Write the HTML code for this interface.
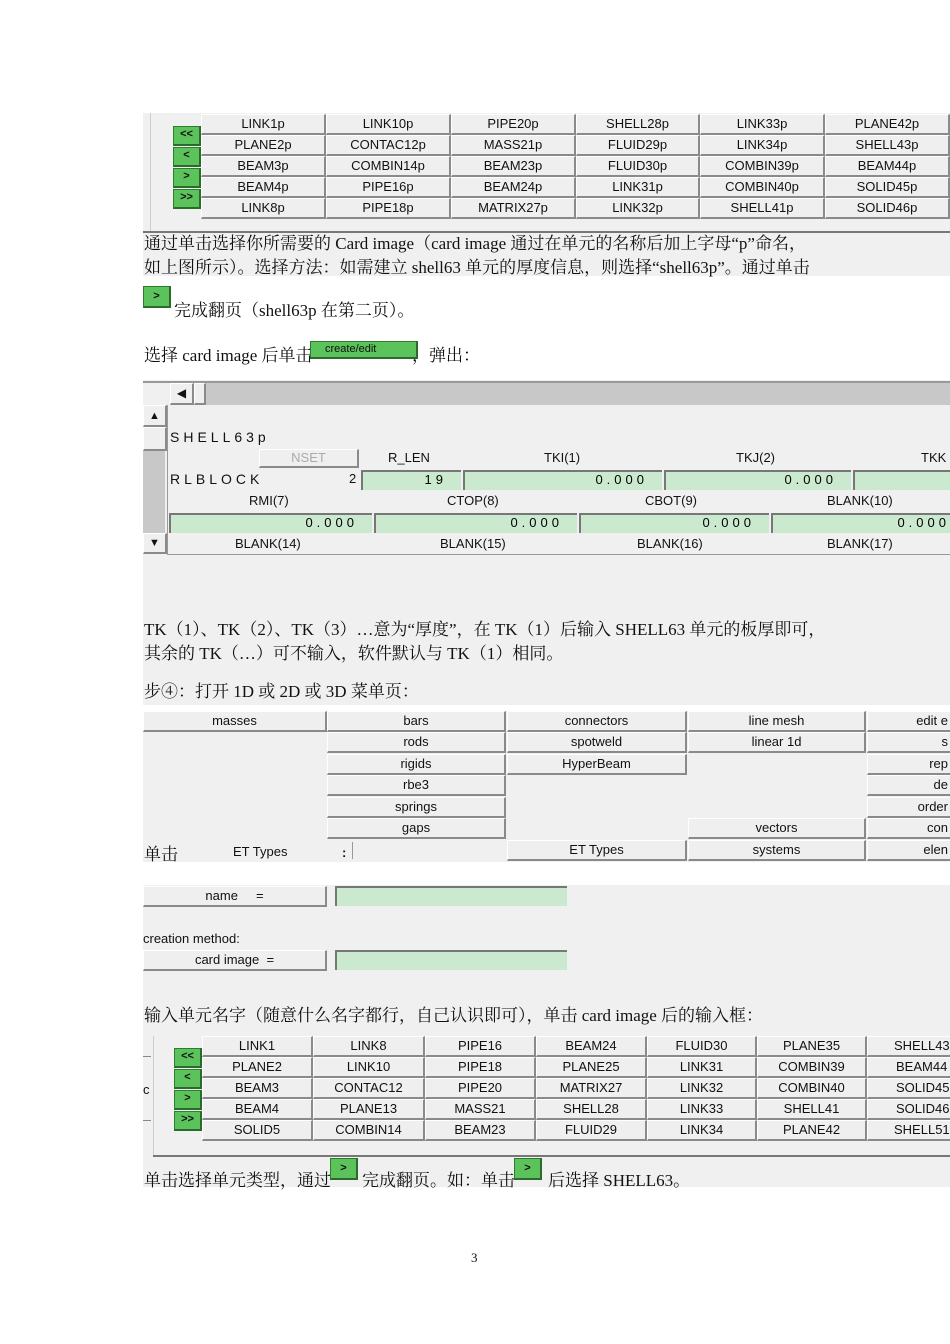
<!DOCTYPE html>
<html><head><meta charset="utf-8">
<style>
*{margin:0;padding:0;box-sizing:border-box}
body{width:950px;height:1344px;background:#fff;position:relative;overflow:hidden;font-family:"Liberation Sans",sans-serif}
.g{position:absolute;background:#f0f0f0}
.b{position:absolute;background:#efefef;border-top:1px solid #fff;border-left:1px solid #fff;border-right:2px solid #8a8a8a;border-bottom:2px solid #8a8a8a;font-size:13px;color:#111;text-align:center;white-space:nowrap;overflow:hidden;line-height:18px}
.gr{position:absolute;background:#5cc25c;border:1px solid #2e7d2e;border-right:2px solid #2a6a2a;border-bottom:2px solid #2a6a2a;color:#111;font-size:11px;font-weight:bold;text-align:center;line-height:15px}
.f{position:absolute;background:#cbe9cf;border-left:2px solid #777;border-top:2px solid #777;font-size:13px;text-align:right;padding-right:14px;letter-spacing:4px;line-height:16px}
.t{position:absolute;font-family:"Liberation Serif","Noto Serif CJK SC",serif;font-size:17px;color:#111;white-space:nowrap}
.s{position:absolute;font-size:13px;color:#111;white-space:nowrap}
.l{position:absolute;background:#777}
</style></head><body>

<!-- panel 1 -->
<div class="g" style="left:143px;top:113px;width:807px;height:163px"></div>
<div class="l" style="left:150px;top:113px;width:1px;height:118px;background:#ccc"></div>
<div class="l" style="left:143px;top:231px;width:807px;height:2px"></div>
<div class="gr" style="left:173px;top:126px;width:28px;height:20px">&lt;&lt;</div>
<div class="gr" style="left:173px;top:147px;width:28px;height:20px">&lt;</div>
<div class="gr" style="left:173px;top:168px;width:28px;height:20px">&gt;</div>
<div class="gr" style="left:173px;top:189px;width:28px;height:20px">&gt;&gt;</div>

<div class="b" style="left:201px;top:114px;width:125px;height:21px">LINK1p</div>
<div class="b" style="left:201px;top:135px;width:125px;height:21px">PLANE2p</div>
<div class="b" style="left:201px;top:156px;width:125px;height:21px">BEAM3p</div>
<div class="b" style="left:201px;top:177px;width:125px;height:21px">BEAM4p</div>
<div class="b" style="left:201px;top:198px;width:125px;height:21px">LINK8p</div>
<div class="b" style="left:326px;top:114px;width:125px;height:21px">LINK10p</div>
<div class="b" style="left:326px;top:135px;width:125px;height:21px">CONTAC12p</div>
<div class="b" style="left:326px;top:156px;width:125px;height:21px">COMBIN14p</div>
<div class="b" style="left:326px;top:177px;width:125px;height:21px">PIPE16p</div>
<div class="b" style="left:326px;top:198px;width:125px;height:21px">PIPE18p</div>
<div class="b" style="left:451px;top:114px;width:125px;height:21px">PIPE20p</div>
<div class="b" style="left:451px;top:135px;width:125px;height:21px">MASS21p</div>
<div class="b" style="left:451px;top:156px;width:125px;height:21px">BEAM23p</div>
<div class="b" style="left:451px;top:177px;width:125px;height:21px">BEAM24p</div>
<div class="b" style="left:451px;top:198px;width:125px;height:21px">MATRIX27p</div>
<div class="b" style="left:576px;top:114px;width:124px;height:21px">SHELL28p</div>
<div class="b" style="left:576px;top:135px;width:124px;height:21px">FLUID29p</div>
<div class="b" style="left:576px;top:156px;width:124px;height:21px">FLUID30p</div>
<div class="b" style="left:576px;top:177px;width:124px;height:21px">LINK31p</div>
<div class="b" style="left:576px;top:198px;width:124px;height:21px">LINK32p</div>
<div class="b" style="left:700px;top:114px;width:125px;height:21px">LINK33p</div>
<div class="b" style="left:700px;top:135px;width:125px;height:21px">LINK34p</div>
<div class="b" style="left:700px;top:156px;width:125px;height:21px">COMBIN39p</div>
<div class="b" style="left:700px;top:177px;width:125px;height:21px">COMBIN40p</div>
<div class="b" style="left:700px;top:198px;width:125px;height:21px">SHELL41p</div>
<div class="b" style="left:825px;top:114px;width:125px;height:21px">PLANE42p</div>
<div class="b" style="left:825px;top:135px;width:125px;height:21px">SHELL43p</div>
<div class="b" style="left:825px;top:156px;width:125px;height:21px">BEAM44p</div>
<div class="b" style="left:825px;top:177px;width:125px;height:21px">SOLID45p</div>
<div class="b" style="left:825px;top:198px;width:125px;height:21px">SOLID46p</div>

<div class="t" style="left:144px;top:229px">通过单击选择你所需要的 Card image（card image 通过在单元的名称后加上字母“p”命名，</div>
<div class="t" style="left:144px;top:253px">如上图所示）。选择方法：如需建立 shell63 单元的厚度信息，则选择“shell63p”。通过单击</div>
<div class="gr" style="left:143px;top:286px;width:28px;height:22px;line-height:18px">&gt;</div>
<div class="t" style="left:174px;top:296px">完成翻页（shell63p 在第二页）。</div>
<div class="t" style="left:144px;top:341px">选择 card image 后单击</div>
<div class="gr" style="left:310px;top:341px;width:108px;height:18px;font-weight:normal;font-size:11px;line-height:14px;text-align:left;padding-left:14px">create/edit</div>
<div class="t" style="left:412px;top:341px">，弹出：</div>

<!-- panel 2 + text area -->
<div class="g" style="left:143px;top:380px;width:807px;height:482px"></div>
<div class="l" style="left:143px;top:381px;width:807px;height:2px;background:#999"></div>
<div class="g" style="left:205px;top:383px;width:745px;height:22px;background:#c8c8c8"></div>
<div class="b" style="left:170px;top:383px;width:24px;height:22px;font-size:12px">◀</div>
<div class="b" style="left:194px;top:383px;width:12px;height:22px"></div>
<div class="b" style="left:143px;top:405px;width:24px;height:22px;font-size:11px;line-height:20px">▲</div>
<div class="b" style="left:143px;top:427px;width:24px;height:24px"></div>
<div class="g" style="left:143px;top:451px;width:22px;height:82px;background:#c8c8c8"></div>
<div class="b" style="left:143px;top:533px;width:24px;height:21px;font-size:11px">▼</div>
<div class="l" style="left:167px;top:405px;width:1px;height:150px;background:#999"></div>
<div class="s" style="left:170px;top:429px;letter-spacing:4px;font-size:14px">SHELL63p</div>
<div class="b" style="left:259px;top:449px;width:100px;height:19px;color:#aaa;line-height:16px">NSET</div>
<div class="s" style="left:388px;top:450px">R_LEN</div>
<div class="s" style="left:544px;top:450px">TKI(1)</div>
<div class="s" style="left:736px;top:450px">TKJ(2)</div>
<div class="s" style="left:921px;top:450px">TKK</div>
<div class="s" style="left:170px;top:471px;letter-spacing:4px;font-size:14px">RLBLOCK</div>
<div class="s" style="left:349px;top:471px">2</div>
<div class="f" style="left:361px;top:470px;width:100px;height:20px">19</div>
<div class="f" style="left:463px;top:470px;width:199px;height:20px">0.000</div>
<div class="f" style="left:664px;top:470px;width:187px;height:20px">0.000</div>
<div class="f" style="left:853px;top:470px;width:97px;height:20px"></div>
<div class="s" style="left:249px;top:493px">RMI(7)</div>
<div class="s" style="left:447px;top:493px">CTOP(8)</div>
<div class="s" style="left:645px;top:493px">CBOT(9)</div>
<div class="s" style="left:827px;top:493px">BLANK(10)</div>
<div class="f" style="left:169px;top:513px;width:203px;height:20px">0.000</div>
<div class="f" style="left:374px;top:513px;width:203px;height:20px">0.000</div>
<div class="f" style="left:579px;top:513px;width:190px;height:20px">0.000</div>
<div class="f" style="left:771px;top:513px;width:179px;height:20px;padding-right:0">0.000</div>
<div class="s" style="left:235px;top:536px">BLANK(14)</div>
<div class="s" style="left:440px;top:536px">BLANK(15)</div>
<div class="s" style="left:637px;top:536px">BLANK(16)</div>
<div class="s" style="left:827px;top:536px">BLANK(17)</div>
<div class="l" style="left:167px;top:554px;width:783px;height:1px;background:#999"></div>

<div class="t" style="left:144px;top:615px">TK（1）、TK（2）、TK（3）…意为“厚度”，在 TK（1）后输入 SHELL63 单元的板厚即可，</div>
<div class="t" style="left:144px;top:639px">其余的 TK（…）可不输入，软件默认与 TK（1）相同。</div>
<div class="t" style="left:144px;top:677px">步④：打开 1D 或 2D 或 3D 菜单页：</div>

<!-- panel 3 -->
<div class="g" style="left:143px;top:705px;width:807px;height:6px;background:#fff"></div>
<div class="b" style="left:143px;top:711px;width:184px;height:21px">masses</div>
<div class="b" style="left:327px;top:711px;width:179px;height:21px">bars</div>
<div class="b" style="left:327px;top:732px;width:179px;height:21px">rods</div>
<div class="b" style="left:327px;top:754px;width:179px;height:21px">rigids</div>
<div class="b" style="left:327px;top:775px;width:179px;height:21px">rbe3</div>
<div class="b" style="left:327px;top:797px;width:179px;height:21px">springs</div>
<div class="b" style="left:327px;top:818px;width:179px;height:21px">gaps</div>
<div class="b" style="left:507px;top:711px;width:180px;height:21px">connectors</div>
<div class="b" style="left:507px;top:732px;width:180px;height:21px">spotweld</div>
<div class="b" style="left:507px;top:754px;width:180px;height:21px">HyperBeam</div>
<div class="b" style="left:507px;top:840px;width:180px;height:21px">ET Types</div>
<div class="b" style="left:688px;top:711px;width:178px;height:21px">line mesh</div>
<div class="b" style="left:688px;top:732px;width:178px;height:21px">linear 1d</div>
<div class="b" style="left:688px;top:818px;width:178px;height:21px">vectors</div>
<div class="b" style="left:688px;top:840px;width:178px;height:21px">systems</div>
<div class="b" style="left:867px;top:711px;width:90px;height:21px;text-align:right;padding-right:7px">edit e</div>
<div class="b" style="left:867px;top:732px;width:90px;height:21px;text-align:right;padding-right:7px">s</div>
<div class="b" style="left:867px;top:754px;width:90px;height:21px;text-align:right;padding-right:7px">rep</div>
<div class="b" style="left:867px;top:775px;width:90px;height:21px;text-align:right;padding-right:7px">de</div>
<div class="b" style="left:867px;top:797px;width:90px;height:21px;text-align:right;padding-right:7px">order</div>
<div class="b" style="left:867px;top:818px;width:90px;height:21px;text-align:right;padding-right:7px">con</div>
<div class="b" style="left:867px;top:840px;width:90px;height:21px;text-align:right;padding-right:7px">elen</div>
<div class="t" style="left:144px;top:840px">单击</div>
<div class="s" style="left:233px;top:844px">ET Types</div>
<div class="s" style="left:342px;top:845px;font-weight:bold">:</div>
<div class="l" style="left:352px;top:842px;width:1px;height:17px;background:#999"></div>

<!-- panel 4 + rest -->
<div class="g" style="left:143px;top:885px;width:807px;height:302px"></div>
<div class="b" style="left:143px;top:886px;width:184px;height:21px">name &nbsp;&nbsp;&nbsp; =</div>
<div class="f" style="left:335px;top:886px;width:232px;height:20px"></div>
<div class="s" style="left:143px;top:931px">creation method:</div>
<div class="b" style="left:143px;top:950px;width:184px;height:21px">card image &nbsp;=</div>
<div class="f" style="left:335px;top:950px;width:232px;height:20px"></div>
<div class="t" style="left:144px;top:1001px">输入单元名字（随意什么名字都行，自己认识即可），单击 card image 后的输入框：</div>

<div class="l" style="left:153px;top:1036px;width:1px;height:119px;background:#ccc"></div>
<div class="l" style="left:143px;top:1056px;width:8px;height:1px;background:#888"></div>
<div class="l" style="left:143px;top:1120px;width:8px;height:1px;background:#888"></div>
<div class="s" style="left:143px;top:1082px">c</div>
<div class="l" style="left:153px;top:1155px;width:797px;height:2px"></div>
<div class="gr" style="left:174px;top:1048px;width:28px;height:20px">&lt;&lt;</div>
<div class="gr" style="left:174px;top:1069px;width:28px;height:20px">&lt;</div>
<div class="gr" style="left:174px;top:1090px;width:28px;height:20px">&gt;</div>
<div class="gr" style="left:174px;top:1111px;width:28px;height:20px">&gt;&gt;</div>

<div class="b" style="left:202px;top:1036px;width:111px;height:21px">LINK1</div>
<div class="b" style="left:202px;top:1057px;width:111px;height:21px">PLANE2</div>
<div class="b" style="left:202px;top:1078px;width:111px;height:21px">BEAM3</div>
<div class="b" style="left:202px;top:1099px;width:111px;height:21px">BEAM4</div>
<div class="b" style="left:202px;top:1120px;width:111px;height:21px">SOLID5</div>
<div class="b" style="left:313px;top:1036px;width:112px;height:21px">LINK8</div>
<div class="b" style="left:313px;top:1057px;width:112px;height:21px">LINK10</div>
<div class="b" style="left:313px;top:1078px;width:112px;height:21px">CONTAC12</div>
<div class="b" style="left:313px;top:1099px;width:112px;height:21px">PLANE13</div>
<div class="b" style="left:313px;top:1120px;width:112px;height:21px">COMBIN14</div>
<div class="b" style="left:425px;top:1036px;width:111px;height:21px">PIPE16</div>
<div class="b" style="left:425px;top:1057px;width:111px;height:21px">PIPE18</div>
<div class="b" style="left:425px;top:1078px;width:111px;height:21px">PIPE20</div>
<div class="b" style="left:425px;top:1099px;width:111px;height:21px">MASS21</div>
<div class="b" style="left:425px;top:1120px;width:111px;height:21px">BEAM23</div>
<div class="b" style="left:536px;top:1036px;width:111px;height:21px">BEAM24</div>
<div class="b" style="left:536px;top:1057px;width:111px;height:21px">PLANE25</div>
<div class="b" style="left:536px;top:1078px;width:111px;height:21px">MATRIX27</div>
<div class="b" style="left:536px;top:1099px;width:111px;height:21px">SHELL28</div>
<div class="b" style="left:536px;top:1120px;width:111px;height:21px">FLUID29</div>
<div class="b" style="left:647px;top:1036px;width:110px;height:21px">FLUID30</div>
<div class="b" style="left:647px;top:1057px;width:110px;height:21px">LINK31</div>
<div class="b" style="left:647px;top:1078px;width:110px;height:21px">LINK32</div>
<div class="b" style="left:647px;top:1099px;width:110px;height:21px">LINK33</div>
<div class="b" style="left:647px;top:1120px;width:110px;height:21px">LINK34</div>
<div class="b" style="left:757px;top:1036px;width:110px;height:21px">PLANE35</div>
<div class="b" style="left:757px;top:1057px;width:110px;height:21px">COMBIN39</div>
<div class="b" style="left:757px;top:1078px;width:110px;height:21px">COMBIN40</div>
<div class="b" style="left:757px;top:1099px;width:110px;height:21px">SHELL41</div>
<div class="b" style="left:757px;top:1120px;width:110px;height:21px">PLANE42</div>
<div class="b" style="left:867px;top:1036px;width:100px;height:21px;text-align:left;padding-left:26px">SHELL43</div>
<div class="b" style="left:867px;top:1057px;width:100px;height:21px;text-align:left;padding-left:28px">BEAM44</div>
<div class="b" style="left:867px;top:1078px;width:100px;height:21px;text-align:left;padding-left:28px">SOLID45</div>
<div class="b" style="left:867px;top:1099px;width:100px;height:21px;text-align:left;padding-left:28px">SOLID46</div>
<div class="b" style="left:867px;top:1120px;width:100px;height:21px;text-align:left;padding-left:26px">SHELL51</div>

<div class="t" style="left:144px;top:1166px">单击选择单元类型，通过</div>
<div class="gr" style="left:330px;top:1158px;width:28px;height:22px;line-height:18px">&gt;</div>
<div class="t" style="left:362px;top:1166px">完成翻页。如：单击</div>
<div class="gr" style="left:514px;top:1158px;width:28px;height:22px;line-height:18px">&gt;</div>
<div class="t" style="left:548px;top:1166px">后选择 SHELL63。</div>

<div class="t" style="left:471px;top:1250px;font-size:13px">3</div>
</body></html>
